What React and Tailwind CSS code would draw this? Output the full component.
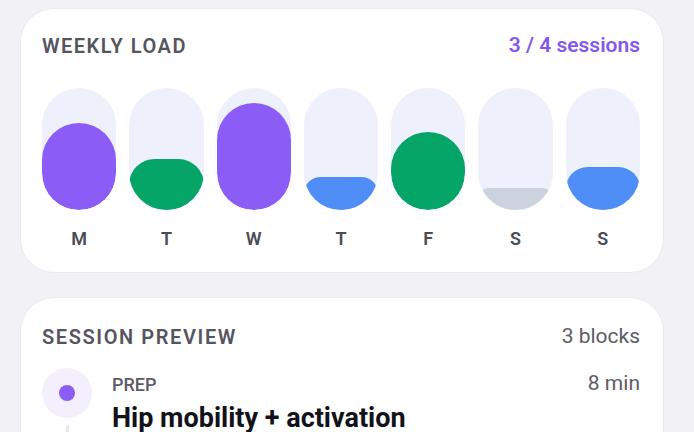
import React from "react";

const days = [
  { d: "M", h: 71, c: "bg-[#8b5cf6]" },
  { d: "T", h: 42, c: "bg-[#05a467]" },
  { d: "W", h: 88, c: "bg-[#8b5cf6]" },
  { d: "T", h: 27, c: "bg-[#4f8ef6]" },
  { d: "F", h: 64, c: "bg-[#05a467]" },
  { d: "S", h: 18, c: "bg-[#cbd3df]" },
  { d: "S", h: 35, c: "bg-[#4f8ef6]" },
];

export default function App() {
  return (
    <div
      className="w-[694px] h-[432px] overflow-hidden bg-[#f2f2f5] pt-[8px] pl-[20px]"
      style={{ fontFamily: "Roboto, 'Noto Sans', sans-serif" }}
    >
      <div className="w-[644px] rounded-[34px] bg-white border border-[#e8e9f4] pl-[21px] pr-[23px] pt-[24px] pb-[23px]">
        <div className="flex items-center justify-between h-[26px]">
          <span className="text-[20px] font-semibold tracking-[0.075em] text-[#55555f]">WEEKLY LOAD</span>
          <span className="text-[21px] font-semibold text-[#8557ee]">3 / 4 sessions</span>
        </div>
        <div className="mt-[29px] grid grid-cols-7 gap-[13px]">
          {days.map((x, i) => (
            <div key={i} className="flex flex-col items-center">
              <div className="w-full h-[122px] rounded-full bg-[#eef1fc] overflow-hidden flex flex-col justify-end">
                <div className={`w-full rounded-full ${x.c}`} style={{ height: `${x.h}%` }} />
              </div>
              <div className="mt-[19px] h-[20px] leading-[20px] text-[18px] font-semibold text-[#4b4b55]">{x.d}</div>
            </div>
          ))}
        </div>
      </div>

      <div className="mt-[24px] w-[644px] h-[200px] rounded-[34px] bg-white border border-[#e8e9f4] pl-[21px] pr-[23px] pt-[26px]">
        <div className="flex items-center justify-between h-[26px]">
          <span className="text-[20px] font-semibold tracking-[0.08em] text-[#55555f]">SESSION PREVIEW</span>
          <span className="text-[21px] text-[#5c5c66]">3 blocks</span>
        </div>
        <div className="mt-[18px] flex gap-[20px]">
          <div className="flex flex-col items-center w-[50px]">
            <div className="w-[50px] h-[50px] rounded-full bg-[#f3effd] flex items-center justify-center">
              <div className="w-[16px] h-[16px] rounded-full bg-[#8b5cf6]" />
            </div>
            <div className="mt-[7px] w-[3px] h-[40px] bg-[#e6e8f2] rounded-full" />
          </div>
          <div className="flex-1 pt-[4px]">
            <div className="flex items-center justify-between h-[24px]">
              <span className="text-[18px] font-medium text-[#5c5c66]">PREP</span>
              <span className="text-[21px] text-[#5c5c66]">8 min</span>
            </div>
            <div className="mt-[6px] text-[27px] font-bold text-[#12121a] leading-[32px]">Hip mobility + activation</div>
          </div>
        </div>
      </div>
    </div>
  );
}
